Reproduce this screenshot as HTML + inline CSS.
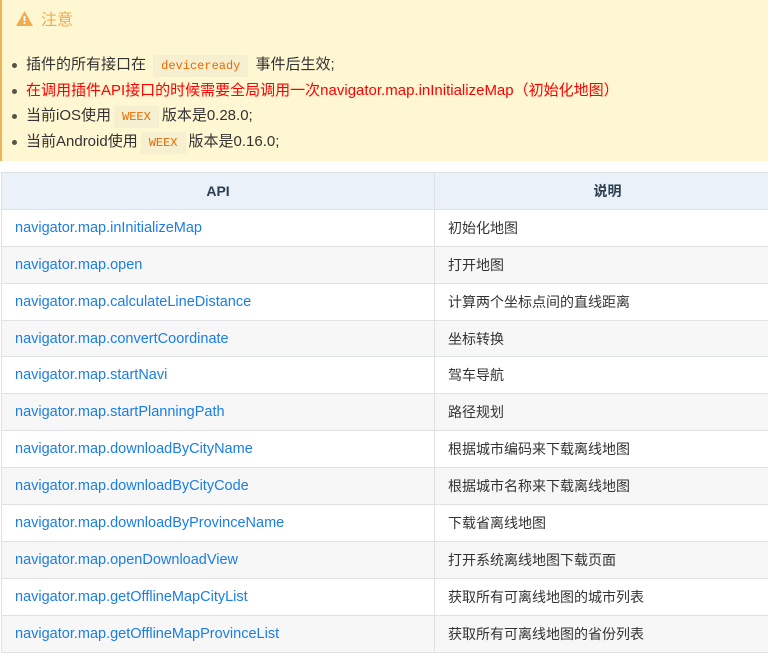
<!DOCTYPE html>
<html><head><meta charset="utf-8"><style>
body{margin:0;width:768px;height:653px;overflow:hidden;background:#fff;font-family:"Liberation Sans","Noto Sans CJK SC",sans-serif;font-size:14px;color:#333}
.tip{position:absolute;left:0;top:0;width:766px;height:161px;background:#fff6d2;border-left:2px solid #f0b45a}
.title{position:absolute;left:14px;top:6px;color:#f0ad4e;font-size:16px;display:flex;align-items:center}
.title svg{margin-right:8px}
ul{position:absolute;left:0;top:52px;margin:0;padding:0 0 0 24px;list-style:none}
li{height:25.5px;line-height:25.5px;position:relative;color:#333;white-space:nowrap;font-size:15px}
li:before{content:"";position:absolute;left:-14px;top:11px;width:5px;height:5px;border-radius:50%;background:#554}
li.r{color:#f00}
code{font-family:"Liberation Mono",monospace;font-size:12px;color:#e96900;background:#f6efd0;padding:4px 8px;margin:0 3px}
table{position:absolute;left:1px;top:172px;border-collapse:collapse;width:780px}
td,th{border:1px solid #dfe2e5;height:35.9px;padding:0 0 0 13px;text-align:left;font-size:14px;line-height:18px}
th{background:#eaf1f9;text-align:center;font-weight:bold;padding:0;color:#2c3e50}
td:first-child{width:419px;color:#1a7ee6;font-size:14.5px}
tr:nth-child(odd) td{background:#f7f7f7}
</style></head><body>
<div class="tip">
<div class="title"><svg width="17" height="15" viewBox="0 0 17 15"><path d="M8.5 0L17 15H0Z" fill="#f0ad4e"/><rect x="7.6" y="5" width="1.8" height="5" fill="#fff"/><rect x="7.6" y="11" width="1.8" height="1.8" fill="#fff"/></svg>注意</div>
<ul>
<li>插件的所有接口在 <code>deviceready</code> 事件后生效;</li>
<li class="r">在调用插件API接口的时候需要全局调用一次navigator.map.inInitializeMap（初始化地图）</li>
<li>当前iOS使用<code>WEEX</code>版本是0.28.0;</li>
<li>当前Android使用<code>WEEX</code>版本是0.16.0;</li>
</ul>
</div>
<table>
<tr><th>API</th><th>说明</th></tr>
<tr><td>navigator.map.inInitializeMap</td><td>初始化地图</td></tr>
<tr><td>navigator.map.open</td><td>打开地图</td></tr>
<tr><td>navigator.map.calculateLineDistance</td><td>计算两个坐标点间的直线距离</td></tr>
<tr><td>navigator.map.convertCoordinate</td><td>坐标转换</td></tr>
<tr><td>navigator.map.startNavi</td><td>驾车导航</td></tr>
<tr><td>navigator.map.startPlanningPath</td><td>路径规划</td></tr>
<tr><td>navigator.map.downloadByCityName</td><td>根据城市编码来下载离线地图</td></tr>
<tr><td>navigator.map.downloadByCityCode</td><td>根据城市名称来下载离线地图</td></tr>
<tr><td>navigator.map.downloadByProvinceName</td><td>下载省离线地图</td></tr>
<tr><td>navigator.map.openDownloadView</td><td>打开系统离线地图下载页面</td></tr>
<tr><td>navigator.map.getOfflineMapCityList</td><td>获取所有可离线地图的城市列表</td></tr>
<tr><td>navigator.map.getOfflineMapProvinceList</td><td>获取所有可离线地图的省份列表</td></tr>
</table>
</body></html>
